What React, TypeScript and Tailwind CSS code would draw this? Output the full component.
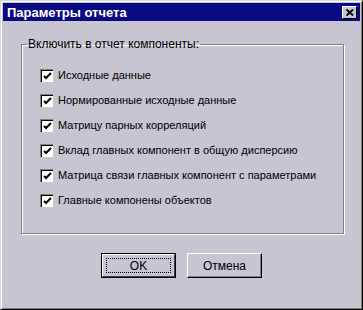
import React from 'react';

const items = [
  'Исходные данные',
  'Нормированные исходные данные',
  'Матрицу парных корреляций',
  'Вклад главных компонент в общую дисперсию',
  'Матрица связи главных компонент с параметрами',
  'Главные компонены объектов',
];

function CheckBox() {
  return (
    <span className="w-[13px] h-[13px] bg-white border-t border-l border-[#808080] border-r-white border-b-white shadow-[inset_1px_1px_0_#000] flex items-center justify-center shrink-0">
      <svg width="9" height="9" viewBox="0 0 9 9">
        <path d="M1 4 L3 6 L8 1" stroke="#000" strokeWidth="2" fill="none" />
      </svg>
    </span>
  );
}

export default function App() {
  return (
    <div
      className="w-[363px] h-[310px] bg-[#c6c5d0] border border-t-[#d8d8dc] border-l-[#d8d8dc] border-r-black border-b-black shadow-[inset_1px_1px_0_#fff,inset_-1px_-1px_0_#808080] p-[1px] flex flex-col text-black"
      style={{ fontFamily: '"Liberation Sans", Arial, sans-serif' }}
    >
      <div className="h-[18px] mx-[1px] mt-[1px] bg-[#0a0a82] flex items-center justify-between pl-[4px] pr-[3px]">
        <span className="text-white font-bold text-[13px] leading-none">Параметры отчета</span>
        <span className="w-[15px] h-[13px] bg-[#c6c5d0] border border-t-white border-l-white border-r-black border-b-black flex items-center justify-center">
          <svg width="8" height="7" viewBox="0 0 8 7">
            <path d="M0.5 0.5 L7 6.5 M7 0.5 L0.5 6.5" stroke="#000" strokeWidth="1.8" />
          </svg>
        </span>
      </div>

      <fieldset className="mt-[16px] ml-[19px] w-[323px] h-[197px] border border-[#808080] shadow-[inset_1px_1px_0_#fff,1px_1px_0_#fff] pl-[18px] pt-[18px]">
        <legend className="ml-[-13px] px-[1px] text-[12px] leading-[14px]">Включить в отчет компоненты:</legend>
        <div className="flex flex-col gap-[12px]">
          {items.map((t) => (
            <label key={t} className="flex items-center gap-[5px] h-[13px] text-[11px] leading-none">
              <CheckBox />
              <span>{t}</span>
            </label>
          ))}
        </div>
      </fieldset>

      <div className="mt-[19px] flex justify-center gap-[11px]">
        <button className="w-[75px] h-[25px] border border-black p-0">
          <span className="w-full h-full border border-t-white border-l-white border-r-[#404040] border-b-[#404040] flex items-center justify-center p-[3px]">
            <span className="w-full h-full border border-dotted border-black flex items-center justify-center text-[12px] leading-none">OK</span>
          </span>
        </button>
        <button className="w-[75px] h-[25px] border border-t-white border-l-white border-r-black border-b-black shadow-[inset_-1px_-1px_0_#808080] text-[12px] leading-none flex items-center justify-center">
          Отмена
        </button>
      </div>
    </div>
  );
}
